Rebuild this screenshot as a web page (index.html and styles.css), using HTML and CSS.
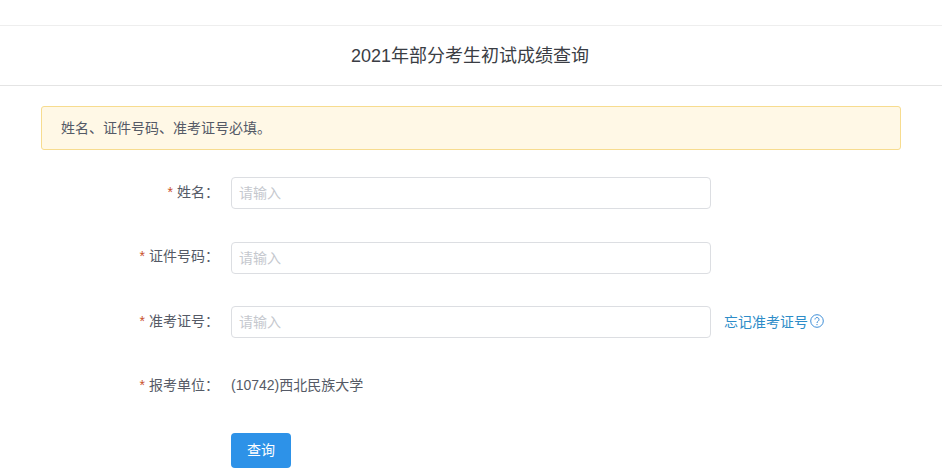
FILE: index.html
```html
<!DOCTYPE html>
<html lang="zh-CN">
<head>
<meta charset="utf-8">
<title>2021年部分考生初试成绩查询</title>
<link rel="stylesheet" href="styles.css">
</head>
<body>
<div class="page">
  <header class="title">2021年部分考生初试成绩查询</header>
  <main class="content">
    <div class="alert">姓名、证件号码、准考证号必填。</div>
    <form class="form">
      <div class="row">
        <label class="label"><span class="star">*</span>姓名：</label>
        <input class="input" type="text" placeholder="请输入">
      </div>
      <div class="row">
        <label class="label"><span class="star">*</span>证件号码：</label>
        <input class="input" type="text" placeholder="请输入">
      </div>
      <div class="row">
        <label class="label"><span class="star">*</span>准考证号：</label>
        <input class="input" type="text" placeholder="请输入">
        <a class="forgot" href="#">忘记准考证号<svg class="help" viewBox="0 0 14 14" width="14" height="14" aria-hidden="true"><circle cx="7" cy="7" r="6.3" fill="none" stroke="currentColor" stroke-width="1"/><path d="M5 5.5a2 2 0 1 1 3.2 1.6C7.4 7.7 7 8 7 9" fill="none" stroke="currentColor" stroke-width="1"/><circle cx="7" cy="10.6" r=".7" fill="currentColor"/></svg></a>
      </div>
      <div class="row row-last">
        <label class="label"><span class="star">*</span>报考单位：</label>
        <span class="value">(10742)西北民族大学</span>
      </div>
      <div class="actions">
        <button class="btn" type="button">查询</button>
      </div>
    </form>
  </main>
</div>
</body>
</html>
```

FILE: styles.css
```css
* { box-sizing: border-box; }
html, body { margin: 0; padding: 0; background: #fff; overflow: hidden; }
body {
  font-family: "Liberation Sans", "Noto Sans CJK SC", sans-serif;
  font-size: 14px;
  color: #555a66;
}
.page { padding-top: 25px; }
.title {
  height: 61px;
  padding: 0 2px 4px 0;
  border-top: 1px solid #eeeeee;
  border-bottom: 1px solid #e4e4e4;
  display: flex;
  align-items: center;
  justify-content: center;
  font-size: 18px;
  color: #3a3d44;
}
.content { padding: 20px 41px 0; }
.alert {
  height: 44px;
  display: flex;
  align-items: center;
  padding: 0 19px 3px;
  background: #fff8e6;
  border: 1px solid #f7dc8f;
  border-radius: 3px;
  font-size: 14px;
}
.form { margin-top: 27px; }
.row {
  display: flex;
  align-items: center;
  height: 32px;
  margin-bottom: 32.5px;
}
.row-last { margin-bottom: 30.5px; }
.label {
  width: 178px;
  flex: none;
  margin-right: 12px;
  padding-bottom: 5px;
  text-align: right;
}
.star { color: #c8512b; margin-right: 4px; }
.input {
  width: 480px;
  height: 32px;
  padding: 0 7px;
  border: 1px solid #dcdee2;
  border-radius: 4px;
  font: inherit;
  color: inherit;
  outline: none;
}
.input::placeholder { color: #c5c8ce; opacity: 1; }
.forgot {
  margin-left: 13px;
  padding-bottom: 2px;
  display: inline-flex;
  align-items: center;
  gap: 2px;
  font-size: 14px;
  color: #2d8cc8;
  text-decoration: none;
}
.help { color: #3f8fd8; }
.value { color: #555a66; font-size: 14px; padding-bottom: 5px; }
.btn {
  display: block;
  margin-left: 190px;
  width: 60px;
  height: 35px;
  padding: 0 0 3px;
  border: 0;
  border-radius: 4px;
  background: #2d92e8;
  color: #fff;
  font: inherit;
}
```
